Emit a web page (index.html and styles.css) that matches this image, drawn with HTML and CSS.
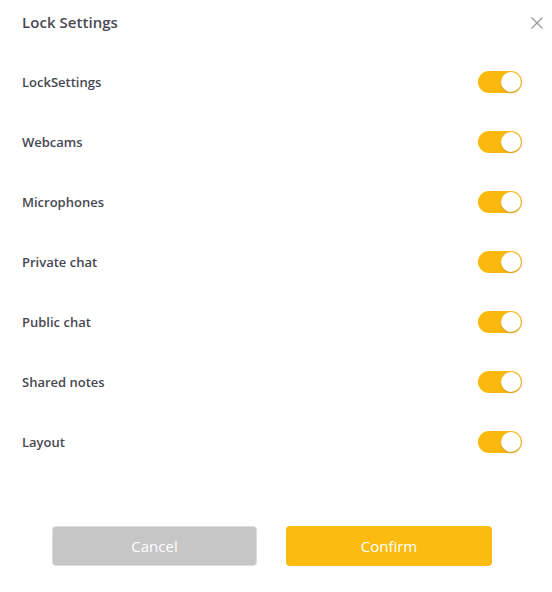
FILE: index.html
```html
<!DOCTYPE html>
<html>
<head>
<meta charset="utf-8">
<link rel="stylesheet" href="styles.css">
</head>
<body>
<div class="dialog">
  <div class="header">
    <h1 class="title">Lock Settings</h1>
    <button class="close" aria-label="Close">
      <svg width="12" height="12" viewBox="0 0 12 12"><path d="M0.5 0.5 L11.5 11.5 M11.5 0.5 L0.5 11.5" stroke="#9a9a9a" stroke-width="1.3" fill="none"/></svg>
    </button>
  </div>
  <div class="rows">
    <div class="row"><span class="label">LockSettings</span><span class="toggle"><span class="knob"></span></span></div>
    <div class="row"><span class="label">Webcams</span><span class="toggle"><span class="knob"></span></span></div>
    <div class="row"><span class="label">Microphones</span><span class="toggle"><span class="knob"></span></span></div>
    <div class="row"><span class="label">Private chat</span><span class="toggle"><span class="knob"></span></span></div>
    <div class="row"><span class="label">Public chat</span><span class="toggle"><span class="knob"></span></span></div>
    <div class="row"><span class="label">Shared notes</span><span class="toggle"><span class="knob"></span></span></div>
    <div class="row"><span class="label">Layout</span><span class="toggle"><span class="knob"></span></span></div>
  </div>
  <div class="actions">
    <button class="btn cancel">Cancel</button>
    <button class="btn confirm">Confirm</button>
  </div>
</div>
</body>
</html>
```
FILE: styles.css
```css
html, body {
  margin: 0;
  padding: 0;
  background: #ffffff;
}
body {
  font-family: "Open Sans", "Noto Sans", sans-serif;
  width: 552px;
  height: 592px;
}
.dialog {
  padding: 0 9px 0 22px;
}
.header {
  height: 44px;
  display: flex;
  align-items: center;
  justify-content: space-between;
  margin-bottom: 8px;
}
.title {
  margin: 0;
  font-size: 15px;
  font-weight: 600;
  color: #4a4a53;
  letter-spacing: 0.05px;
}
.close {
  border: none;
  background: none;
  padding: 0;
  width: 12px;
  height: 12px;
  margin-top: 1px;
  display: flex;
}
.rows {
  display: flex;
  flex-direction: column;
  padding-right: 21px;
}
.row {
  height: 60px;
  display: flex;
  align-items: center;
  justify-content: space-between;
}
.label {
  font-size: 13px;
  font-weight: 600;
  color: #484852;
  letter-spacing: 0;
}
.toggle {
  width: 44px;
  height: 22px;
  border-radius: 11px;
  background: #fbb90f;
  position: relative;
  display: block;
}
.knob {
  position: absolute;
  top: 1px;
  right: 1px;
  width: 20px;
  height: 20px;
  border-radius: 50%;
  background: #ffffff;
  box-shadow: 0 1px 2px rgba(120, 80, 0, 0.35);
}
.actions {
  display: flex;
  gap: 29px;
  margin-top: 54px;
  padding-left: 30px;
}
.btn {
  height: 40px;
  border-radius: 4px;
  font-family: "Open Sans", "Noto Sans", sans-serif;
  font-size: 15px;
  color: #ffffff;
  border: none;
  padding: 0;
}
.cancel {
  width: 205px;
  background: #c6c6c6;
  border: 1px solid #dcdcdc;
}
.confirm {
  width: 206px;
  background: #fbbb10;
}
```
